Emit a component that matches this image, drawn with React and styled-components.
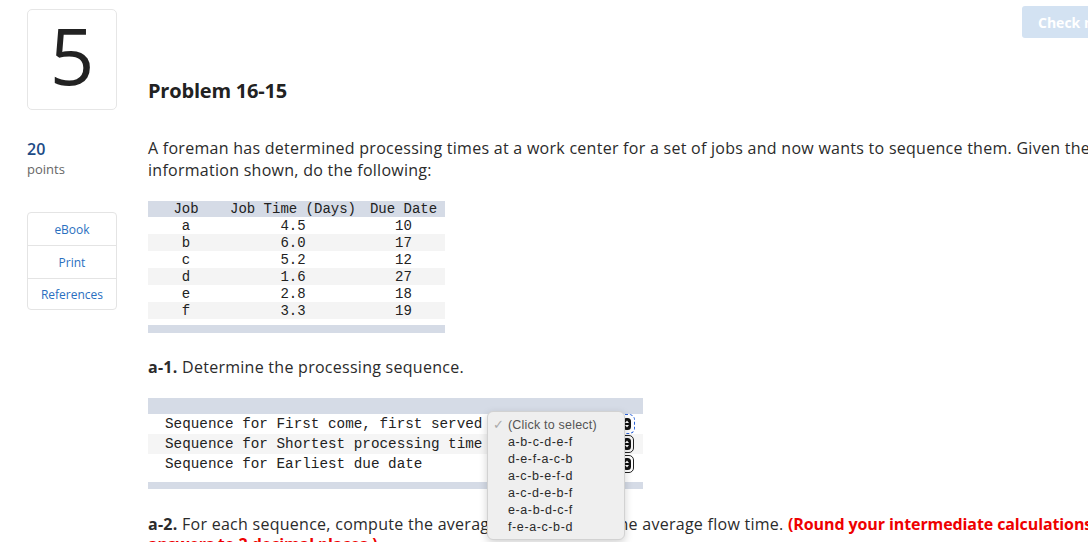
import React from "react";
import styled, { createGlobalStyle } from "styled-components";

const Global = createGlobalStyle`
  html, body { margin: 0; padding: 0; background: #fff; overflow: hidden; }
  body { font-family: "Open Sans", "Liberation Sans", sans-serif; color: #2b2b2b; }
  * { box-sizing: border-box; }
`;

const Page = styled.div`
  width: 1140px;
  padding: 9px 0 0 27px;
`;

const Header = styled.div`
  display: flex;
  align-items: flex-start;
`;

const NumberBox = styled.div`
  width: 90px;
  height: 101px;
  flex-shrink: 0;
  border: 1px solid #e6e6e6;
  border-radius: 5px;
  display: flex;
  align-items: center;
  justify-content: center;
  font-size: 78px;
  font-weight: 400;
  color: #222;
  line-height: 1;
  padding-bottom: 10px;
`;

const Title = styled.h1`
  margin: 0 0 7px 31px;
  align-self: flex-end;
  font-size: 20px;
  line-height: 24px;
  font-weight: 700;
  color: #222;
  letter-spacing: -0.2px;
`;

const CheckButton = styled.button`
  margin-left: auto;
  margin-top: -3px;
  width: 110px;
  height: 32px;
  flex-shrink: 0;
  border: none;
  border-radius: 3px;
  background: #d3e2f2;
  color: #fff;
  font-family: inherit;
  font-size: 14px;
  font-weight: 700;
  text-align: left;
  white-space: nowrap;
  overflow: hidden;
  padding: 0 0 0 16px;
  margin-right: 8px;
`;

const Body = styled.div`
  display: flex;
  margin-top: 27px;
`;

const Sidebar = styled.div`
  width: 90px;
  flex-shrink: 0;
  display: flex;
  flex-direction: column;
`;

const Points = styled.div`
  margin-top: 2px;
  font-size: 16px;
  line-height: 20px;
  font-weight: 600;
  color: #1d4b86;
`;

const PointsLabel = styled.div`
  font-size: 13px;
  line-height: 18px;
  color: #666;
  margin-top: 1px;
`;

const LinkBox = styled.div`
  margin-top: 34px;
  border: 1px solid #e4e4e4;
  border-radius: 4px;
  display: flex;
  flex-direction: column;
`;

const LinkRow = styled.div`
  height: ${(p) => p.$h}px;
  display: flex;
  align-items: center;
  justify-content: center;
  font-size: 12px;
  color: #2a6fc0;
  border-top: ${(p) => (p.$first ? "none" : "1px solid #e4e4e4")};
`;

const Main = styled.div`
  margin-left: 31px;
  flex: 1;
  min-width: 0;
`;

const Para = styled.p`
  margin: 0;
  font-size: 16px;
  line-height: 22px;
  letter-spacing: 0.27px;
  white-space: nowrap;
  color: #2b2b2b;
`;

const Mono = styled.div`
  font-family: "Liberation Mono", "Courier New", monospace;
  font-size: 14.3px;
  color: #222;
`;

const JobTable = styled(Mono)`
  width: 297px;
  margin-top: 20px;
  font-size: 14px;
`;

const JobRow = styled.div`
  display: grid;
  grid-template-columns: 76px 138px 83px;
  height: ${(p) => p.$h}px;
  align-items: center;
  background: ${(p) => p.$bg};
`;

const Cell = styled.div`
  text-align: center;
  white-space: nowrap;
`;

const Bar = styled.div`
  height: ${(p) => p.$h}px;
  margin-top: ${(p) => p.$mt}px;
  background: #d5dbe6;
`;

const Question = styled.p`
  margin: ${(p) => p.$mt}px 0 0 0;
  font-size: 16px;
  line-height: 20px;
  letter-spacing: 0.27px;
  white-space: nowrap;
  color: #2b2b2b;
`;

const Bold = styled.b`
  font-weight: 700;
`;

const Red = styled.b`
  font-weight: 700;
  color: #ee0000;
  letter-spacing: -0.1px;
`;

const SeqTable = styled(Mono)`
  position: relative;
  width: 495px;
  margin-top: 21px;
`;

const SeqRow = styled.div`
  height: 20px;
  display: flex;
  align-items: center;
  padding-left: 17px;
  background: ${(p) => (p.$alt ? "#f5f5f5" : "#fff")};
`;

const SeqLabel = styled.div`
  width: 325px;
  white-space: nowrap;
`;

const FakeSelect = styled.div`
  width: 144px;
  height: 18px;
  border: 1px solid ${(p) => (p.$focus ? "transparent" : "#222")};
  border-radius: 5px;
  display: flex;
  align-items: center;
  justify-content: flex-end;
  padding-right: 2px;
  outline: ${(p) => (p.$focus ? "1px dashed #2a62d9" : "none")};
`;

const Arrows = () => (
  <svg width="8" height="12" viewBox="0 0 8 12">
    <rect x="0" y="0" width="8" height="12" rx="3.5" fill="#111" />
    <path d="M2 5 L4 2.5 L6 5 Z" fill="#fff" />
    <path d="M2 7 L4 9.5 L6 7 Z" fill="#fff" />
  </svg>
);

const Dropdown = styled.div`
  position: absolute;
  left: 339px;
  top: 13px;
  width: 138px;
  height: 129px;
  background: #efefef;
  border: 1px solid #d2d2d2;
  border-radius: 6px;
  box-shadow: 0 3px 8px rgba(0, 0, 0, 0.18);
  padding: 4px 0 0 0;
  font-family: "Liberation Sans", Arial, sans-serif;
  font-size: 12.5px;
  z-index: 5;
`;

const Option = styled.div`
  height: 17px;
  display: flex;
  align-items: center;
  padding-left: 20px;
  position: relative;
  color: ${(p) => (p.$muted ? "#555" : "#2a2a2a")};
  letter-spacing: ${(p) => (p.$muted ? "0.2px" : "0.6px")};
`;

const Check = styled.span`
  position: absolute;
  left: 5px;
  color: #aaa;
  font-size: 13px;
`;

const jobs = [
  ["a", "4.5", "10"],
  ["b", "6.0", "17"],
  ["c", "5.2", "12"],
  ["d", "1.6", "27"],
  ["e", "2.8", "18"],
  ["f", "3.3", "19"],
];

const sequences = [
  "Sequence for First come, first served",
  "Sequence for Shortest processing time",
  "Sequence for Earliest due date",
];

const options = [
  "a-b-c-d-e-f",
  "d-e-f-a-c-b",
  "a-c-b-e-f-d",
  "a-c-d-e-b-f",
  "e-a-b-d-c-f",
  "f-e-a-c-b-d",
];

export default function App() {
  return (
    <>
      <Global />
      <Page>
        <Header>
          <NumberBox>5</NumberBox>
          <Title>Problem 16-15</Title>
          <CheckButton>Check my work</CheckButton>
        </Header>
        <Body>
          <Sidebar>
            <Points>20</Points>
            <PointsLabel>points</PointsLabel>
            <LinkBox>
              <LinkRow $first $h={32}>eBook</LinkRow>
              <LinkRow $h={33}>Print</LinkRow>
              <LinkRow $h={31}>References</LinkRow>
            </LinkBox>
          </Sidebar>
          <Main>
            <Para>
              A foreman has determined processing times at a work center for a set of jobs and now wants to sequence them. Given the
              <br />
              information shown, do the following:
            </Para>
            <JobTable>
              <JobRow $h={16} $bg="#d5dbe6">
                <Cell>Job</Cell>
                <Cell>Job Time (Days)</Cell>
                <Cell>Due Date</Cell>
              </JobRow>
              {jobs.map((j, i) => (
                <JobRow key={j[0]} $h={17} $bg={i % 2 ? "#f4f4f4" : "#fff"}>
                  <Cell>{j[0]}</Cell>
                  <Cell>{j[1]}</Cell>
                  <Cell>{j[2]}</Cell>
                </JobRow>
              ))}
              <Bar $h={8} $mt={6} />
            </JobTable>
            <Question $mt={24}>
              <Bold>a-1.</Bold> Determine the processing sequence.
            </Question>
            <SeqTable>
              <Bar $h={16} $mt={0} />
              {sequences.map((s, i) => (
                <SeqRow key={s} $alt={i === 1}>
                  <SeqLabel>{s}</SeqLabel>
                  <FakeSelect $focus={i === 0}>
                    <Arrows />
                  </FakeSelect>
                </SeqRow>
              ))}
              <Bar $h={7} $mt={8} />
              <Dropdown>
                <Option $muted>
                  <Check>✓</Check>(Click to select)
                </Option>
                {options.map((o) => (
                  <Option key={o}>{o}</Option>
                ))}
              </Dropdown>
            </SeqTable>
            <Question $mt={25}>
              <Bold>a-2.</Bold> For each sequence, compute the average tardiness and the average flow time.{" "}
              <Red>(Round your intermediate calculations and final</Red>
              <br />
              <Red>answers to 2 decimal places.)</Red>
            </Question>
          </Main>
        </Body>
      </Page>
    </>
  );
}
